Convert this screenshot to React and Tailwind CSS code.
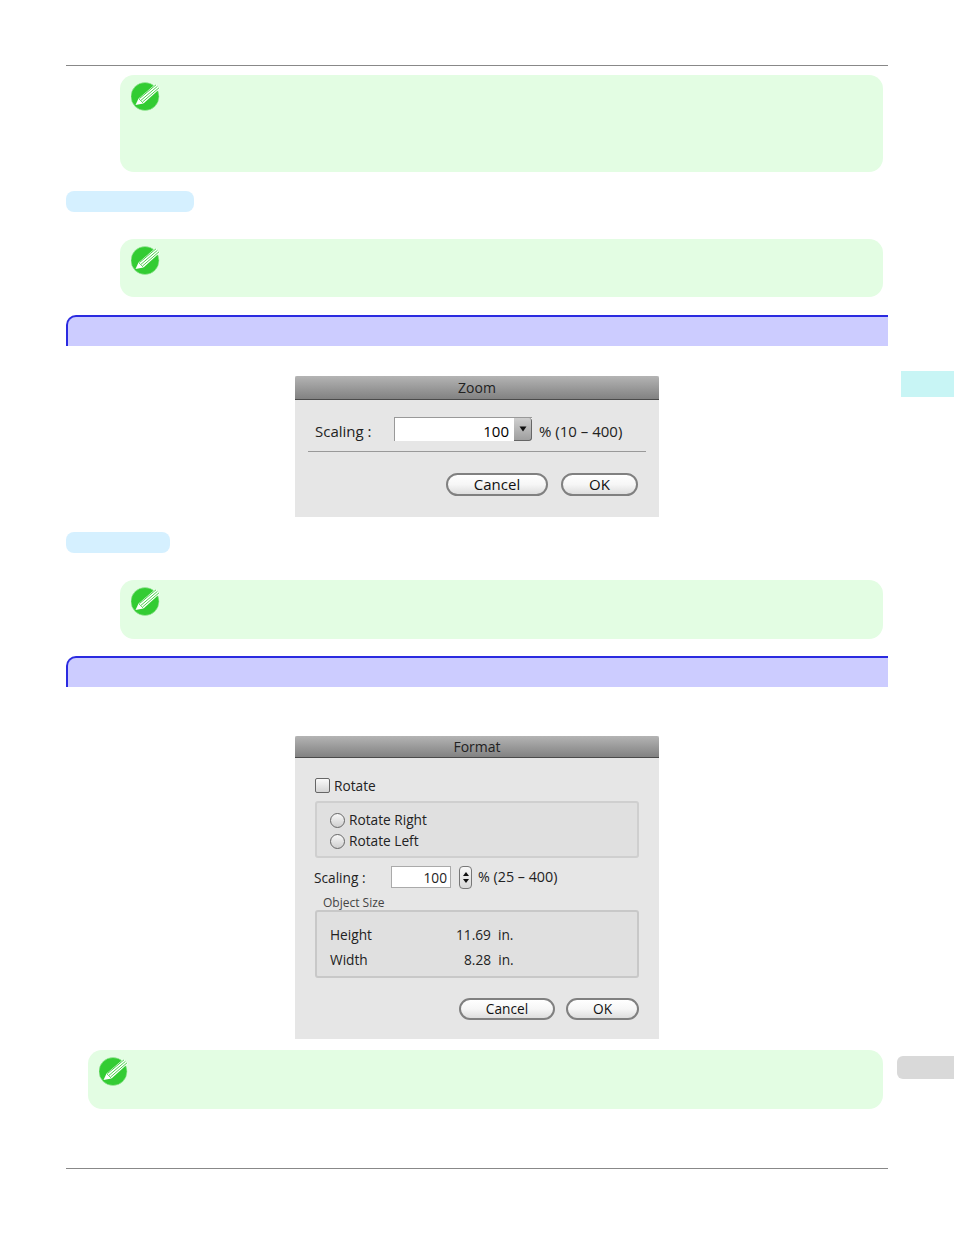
import React from 'react';

// green note badge with the white pencil
function NoteIcon() {
  return (
    <svg viewBox="0 0 30 30" className="h-[30px] w-[30px]">
      <circle cx="14" cy="15.5" r="14" fill="#33cc33" stroke="#a6e8a6" strokeWidth="0.6" />
      <path d="M4.5 24 L7.5 17.5 L24.5 3 L29 7.5 L12.5 22.5 Z" fill="#ffffff" />
      <path d="M8.5 17.5 L25 3.8 M10 19.3 L26.5 5.3 M11.5 21 L28 6.8" stroke="#33cc33" strokeWidth="0.9" fill="none" />
      <path d="M7.5 17.5 L12.5 22.5" stroke="#33cc33" strokeWidth="0.7" fill="none" />
    </svg>
  );
}

function Note({ className }) {
  return (
    <div className={`rounded-[14px] bg-[#e3fde3] pl-[11px] pt-[6px] ${className}`}>
      <NoteIcon />
    </div>
  );
}

function Heading({ className }) {
  return <div className={`h-[31px] rounded-tl-[10px] border-t-2 border-l-2 border-[#2a2ae0] bg-[#ccccff] ${className}`} />;
}

function Pill({ className }) {
  return <div className={`h-[21px] rounded-[8px] bg-[#d5f0ff] ${className}`} />;
}

function TitleBar({ title, className }) {
  return (
    <div className={`flex items-center justify-center rounded-t-[2px] border-b border-[#4a4a4a] bg-gradient-to-b from-[#b4b4b4] to-[#828282] text-[14px] text-[#222] ${className}`}>
      {title}
    </div>
  );
}

function MacButton({ label, className }) {
  return (
    <div className={`flex items-center justify-center rounded-full border-2 border-[#808080] bg-gradient-to-b from-[#ffffff] via-[#f6f6f6] to-[#dedede] font-medium text-[#111] ${className}`}>
      {label}
    </div>
  );
}

function Radio({ label }) {
  return (
    <div className="flex h-[20px] items-center gap-[4px]">
      <div className="h-[15px] w-[15px] rounded-full border border-[#666] bg-gradient-to-b from-[#f8f8f8] to-[#cfcfcf]" />
      <span>{label}</span>
    </div>
  );
}

function ZoomDialog() {
  return (
    <div className="mx-auto h-[141px] w-[364px] bg-[#e6e6e6] text-[15px]">
      <TitleBar title="Zoom" className="h-[24px]" />
      <div className="mt-[18px] flex items-center pl-[20px]">
        <span className="mt-[2px] w-[79px] text-[#222]">Scaling :</span>
        <div className="-mt-[2px] flex h-[24px] w-[138px] border-t border-l border-[#999] bg-white">
          <span className="flex-1 pr-[5px] text-right leading-[27px]">100</span>
          <div className="flex w-[18px] items-center justify-center rounded-r-[3px] border-r border-b border-[#666] bg-gradient-to-b from-[#cfcfcf] to-[#9f9f9f]">
            <svg viewBox="0 0 8 6" className="h-[6px] w-[8px]"><path d="M0.5 0.5 H7.5 L4 5.5 Z" fill="#111" /></svg>
          </div>
        </div>
        <span className="ml-[7px] mt-[2px] text-[#222]">% (10 – 400)</span>
      </div>
      <div className="mx-[13px] mt-[8px] h-px bg-[#999]" />
      <div className="mt-[21px] flex justify-end gap-[13px] pr-[21px]">
        <MacButton label="Cancel" className="h-[23px] w-[102px]" />
        <MacButton label="OK" className="h-[23px] w-[77px]" />
      </div>
    </div>
  );
}

function FormatDialog() {
  return (
    <div className="mx-auto h-[303px] w-[364px] bg-[#e6e6e6] text-[13.7px] text-[#222]">
      <TitleBar title="Format" className="h-[22px]" />
      <div className="mt-[19px] flex h-[16px] items-center gap-[4px] pl-[20px]">
        <div className="h-[15px] w-[15px] rounded-[2px] border border-[#666] bg-gradient-to-b from-[#fafafa] to-[#d5d5d5]" />
        <span className="mt-[2px]">Rotate</span>
      </div>
      <div className="mx-[20px] mt-[8px] flex h-[57px] flex-col gap-px rounded-[3px] border-2 border-[#cfcfcf] bg-[#e0e0e0] pl-[13px] pt-[7px]">
        <Radio label="Rotate Right" />
        <Radio label="Rotate Left" />
      </div>
      <div className="mt-[7px] flex h-[24px] items-center pl-[19px]">
        <span className="mt-[2px] w-[77px]">Scaling :</span>
        <div className="h-[22px] w-[60px] border border-[#aaa] bg-white pr-[3px] text-right leading-[22px]">100</div>
        <div className="ml-[8px] flex h-[23px] w-[13px] flex-col items-center justify-center gap-[3px] rounded-[4px] border border-[#777] bg-gradient-to-b from-[#f8f8f8] to-[#d8d8d8]">
          <svg viewBox="0 0 6 4" className="h-[4px] w-[6px]"><path d="M3 0 L6 4 H0 Z" fill="#111" /></svg>
          <svg viewBox="0 0 6 4" className="h-[4px] w-[6px]"><path d="M0 0 H6 L3 4 Z" fill="#111" /></svg>
        </div>
        <span className="ml-[6px] text-[14.3px]">% (25 – 400)</span>
      </div>
      <div className="mt-[7px] h-[14px] pl-[28px] text-[12px] leading-[14px] text-[#444]">Object Size</div>
      <div className="mx-[20px] h-[68px] rounded-[3px] border-2 border-[#c8c8c8] bg-[#e0e0e0] pl-[13px] pt-[11px]">
        <div className="flex h-[25px] items-center">
          <span className="w-[126px]">Height</span>
          <span>11.69&nbsp; in.</span>
        </div>
        <div className="flex h-[25px] items-center">
          <span className="w-[134px]">Width</span>
          <span>8.28&nbsp; in.</span>
        </div>
      </div>
      <div className="mt-[20px] flex justify-end gap-[11px] pr-[20px]">
        <MacButton label="Cancel" className="h-[22px] w-[96px]" />
        <MacButton label="OK" className="h-[22px] w-[73px]" />
      </div>
    </div>
  );
}

export default function App() {
  return (
    <div className="relative h-[1235px] w-[954px] overflow-hidden bg-white font-['Open_Sans','DejaVu_Sans',sans-serif] text-[14px]">
      <div className="pt-[65px] pl-[66px] pr-[66px]">
        <div className="h-px bg-[#888]" />
        <Note className="mt-[9px] ml-[54px] mr-[5px] h-[97px]" />
        <Pill className="mt-[19px] w-[128px]" />
        <Note className="mt-[27px] ml-[54px] mr-[5px] h-[58px]" />
        <Heading className="mt-[18px]" />
        <div className="mt-[30px]"><ZoomDialog /></div>
        <Pill className="mt-[15px] w-[104px]" />
        <Note className="mt-[27px] ml-[54px] mr-[5px] h-[59px]" />
        <Heading className="mt-[17px]" />
        <div className="mt-[49px]"><FormatDialog /></div>
        <Note className="mt-[11px] ml-[22px] mr-[5px] h-[59px]" />
        <div className="mt-[59px] h-px bg-[#888]" />
      </div>
      <div className="absolute right-0 top-[371px] h-[26px] w-[53px] bg-[#c8f5f5]" />
      <div className="absolute right-0 top-[1056px] h-[23px] w-[57px] rounded-l-[6px] bg-[#d9d9d9]" />
    </div>
  );
}
